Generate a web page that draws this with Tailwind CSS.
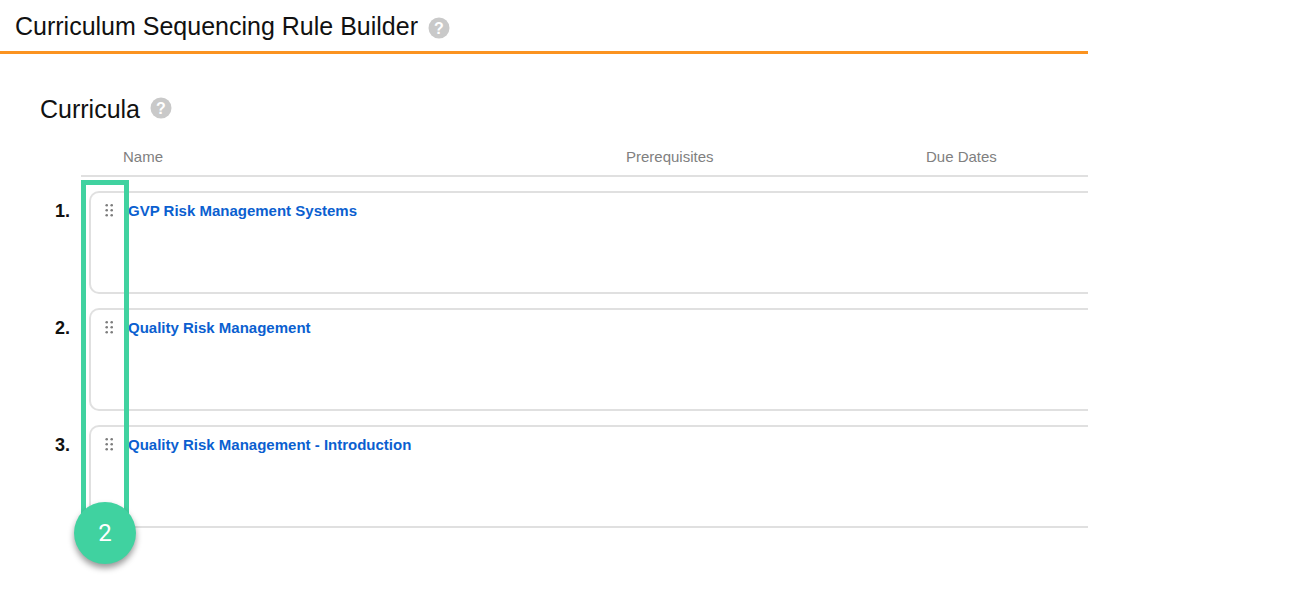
<!doctype html>
<html>
<head>
<meta charset="utf-8">
<script src="https://cdn.jsdelivr.net/npm/@tailwindcss/browser@4"></script>
</head>
<body class="bg-white">
<div class="relative w-[1301px] h-[602px] overflow-hidden font-['Liberation_Sans',Arial,sans-serif]">
  <div class="w-[1088px] overflow-hidden">
    <header class="h-[54px] pl-[15px] pt-[10px] border-b-[3px] border-[#fb9320] flex items-start gap-[10px]">
      <h1 class="text-[25px] leading-[32px] text-[#111111]">Curriculum Sequencing Rule Builder</h1>
      <svg class="mt-[7px]" width="22" height="22" viewBox="0 0 22 22"><circle cx="11" cy="11" r="10.5" fill="#c9c9c9"/><text x="11" y="17" text-anchor="middle" font-family="Liberation Sans" font-weight="700" font-size="16" fill="#fff">?</text></svg>
    </header>
    <section class="pl-[40px] pt-[39px]">
      <div class="flex items-start gap-[10px]">
        <h2 class="text-[25px] leading-[32px] text-[#111111]">Curricula</h2>
        <svg class="mt-[4px]" width="22" height="22" viewBox="0 0 22 22"><circle cx="11" cy="11" r="10.5" fill="#c9c9c9"/><text x="11" y="17" text-anchor="middle" font-family="Liberation Sans" font-weight="700" font-size="16" fill="#fff">?</text></svg>
      </div>
      <div class="ml-[41px] mt-[22px] h-[30px] border-b-2 border-[#e0e0e0] flex text-[15px] leading-[18px] text-[#808080]">
        <div class="w-[545px] pl-[42px] pt-[1px]">Name</div>
        <div class="w-[300px] pt-[1px]">Prerequisites</div>
        <div class="pt-[1px]">Due Dates</div>
      </div>
      <div class="mt-[14px] flex flex-col gap-[14px]">
        <div class="flex">
          <div class="w-[49px] pl-[15px] pt-[10px] text-[18px] leading-[20px] font-bold text-[#111111]">1.</div>
          <div class="flex-1 h-[103px] border-2 border-r-0 border-[#e0e0e0] rounded-l-[10px] flex pt-[9px]">
            <div class="w-[37px] pl-[14px] pt-[2px]"><svg width="9" height="13" viewBox="0 0 9 13" fill="#7d7d7d"><circle cx="1.7" cy="1.3" r="1.3"/><circle cx="6.7" cy="1.3" r="1.3"/><circle cx="1.7" cy="6.3" r="1.3"/><circle cx="6.7" cy="6.3" r="1.3"/><circle cx="1.7" cy="11.3" r="1.3"/><circle cx="6.7" cy="11.3" r="1.3"/></svg></div>
            <a class="text-[15px] leading-[18px] font-bold text-[#0b5fd0]">GVP Risk Management Systems</a>
          </div>
        </div>
        <div class="flex">
          <div class="w-[49px] pl-[15px] pt-[10px] text-[18px] leading-[20px] font-bold text-[#111111]">2.</div>
          <div class="flex-1 h-[103px] border-2 border-r-0 border-[#e0e0e0] rounded-l-[10px] flex pt-[9px]">
            <div class="w-[37px] pl-[14px] pt-[2px]"><svg width="9" height="13" viewBox="0 0 9 13" fill="#7d7d7d"><circle cx="1.7" cy="1.3" r="1.3"/><circle cx="6.7" cy="1.3" r="1.3"/><circle cx="1.7" cy="6.3" r="1.3"/><circle cx="6.7" cy="6.3" r="1.3"/><circle cx="1.7" cy="11.3" r="1.3"/><circle cx="6.7" cy="11.3" r="1.3"/></svg></div>
            <a class="text-[15px] leading-[18px] font-bold text-[#0b5fd0]">Quality Risk Management</a>
          </div>
        </div>
        <div class="flex">
          <div class="w-[49px] pl-[15px] pt-[10px] text-[18px] leading-[20px] font-bold text-[#111111]">3.</div>
          <div class="flex-1 h-[103px] border-2 border-r-0 border-[#e0e0e0] rounded-l-[10px] flex pt-[9px]">
            <div class="w-[37px] pl-[14px] pt-[2px]"><svg width="9" height="13" viewBox="0 0 9 13" fill="#7d7d7d"><circle cx="1.7" cy="1.3" r="1.3"/><circle cx="6.7" cy="1.3" r="1.3"/><circle cx="1.7" cy="6.3" r="1.3"/><circle cx="6.7" cy="6.3" r="1.3"/><circle cx="1.7" cy="11.3" r="1.3"/><circle cx="6.7" cy="11.3" r="1.3"/></svg></div>
            <a class="text-[15px] leading-[18px] font-bold text-[#0b5fd0]">Quality Risk Management - Introduction</a>
          </div>
        </div>
      </div>
    </section>
  </div>
  <div class="absolute left-[81px] top-[180px] w-[48px] h-[340px] border-[5px] border-[#40d2a0]"></div>
  <div class="absolute left-[74px] top-[502px] w-[62px] h-[62px] rounded-full bg-[#40d2a0] shadow-[0_4px_6px_rgba(0,0,0,0.4)] flex items-center justify-center text-white text-[24px] font-['Roboto',sans-serif] font-normal">2</div>
</div>
</body>
</html>
